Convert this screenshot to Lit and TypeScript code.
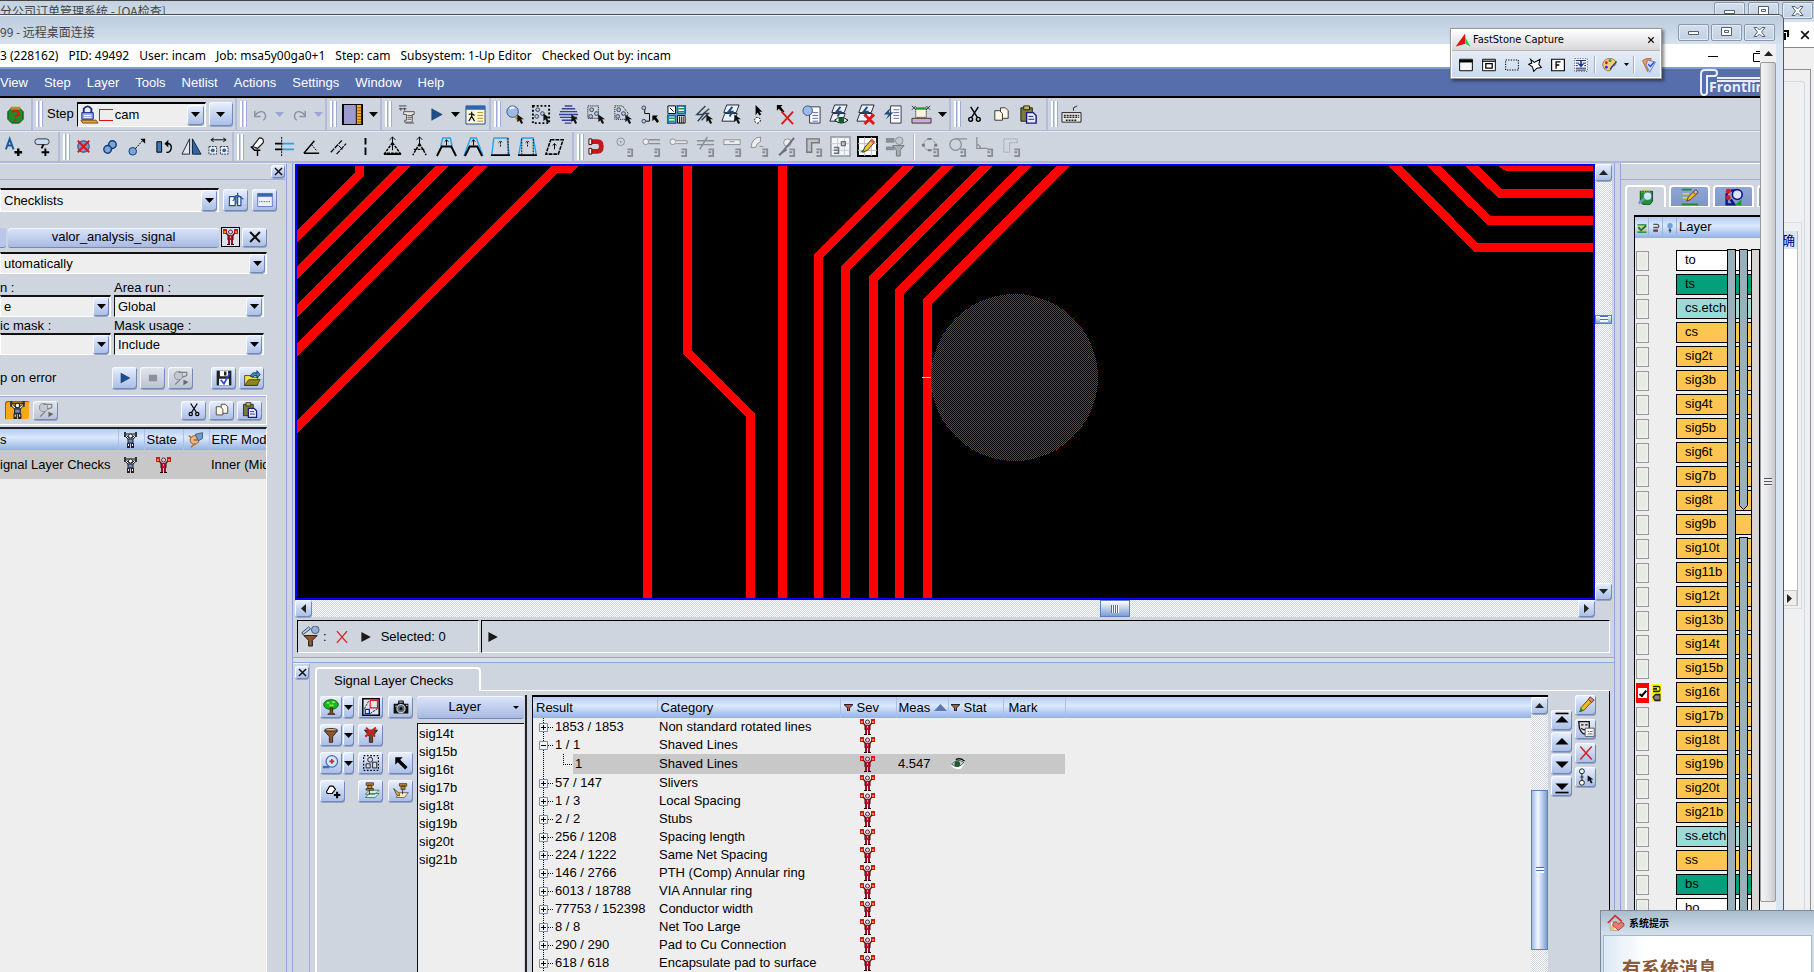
import { LitElement, html, css, svg, nothing } from "lit";
import { customElement } from "lit/decorators.js";
import { classMap } from "lit/directives/class-map.js";

/* ---------- shared icon fragments (22 x 22 grid) ---------- */
const cursor = (x: number, y: number) =>
  svg`<path transform="translate(${x} ${y})" d="M0 0v8l2-2 2 4 2-1-2-4h3z" fill="#111"/>`;
const mag = svg`<path d="M14 14h5v7h-5M14 17h3" fill="none" stroke="#8a8e95" stroke-width="2"/>`;
const pads = svg`<circle cx="7" cy="6" r="2" fill="#a9c4ea" stroke="#445"/><circle cx="12" cy="10" r="2" fill="#a9c4ea" stroke="#445"/><circle cx="6" cy="13" r="2" fill="#a9c4ea" stroke="#445"/>`;
const sheets = svg`<path d="M7 1h13l-3 8H4zM5 10h13l-3 8H2z" fill="#e9f3fb" stroke="#223" stroke-width="1"/><path d="M13 3l-4 5h4l-3 5" fill="none" stroke="#234a78" stroke-width="2"/>`;
const ghost = "#8a8e95";

const ICONS: Record<string, unknown> = {
  bug: svg`<path d="M7 4h8l4 4v8l-4 4H7l-4-4V8z" fill="#1f8a2a" stroke="#0a4010"/><path d="M6 3h10v3H6z" fill="#b0902a"/><path d="M8 9q0-2 3-2t3 3q0 2-3 3v1M11 16v2" fill="none" stroke="#f01010" stroke-width="2"/>`,
  lock: svg`<path d="M6 9V5q4-5 8 0v4" fill="none" stroke="#1a2a7a" stroke-width="2"/><path d="M4 9h12v7H4z" fill="#8fa6dc" stroke="#1a2a7a"/><path d="M6 12h8M6 14h8" stroke="#fff"/><path d="M3 17h16l2 3H5z" fill="#e5a33a" stroke="#7a4a10"/>`,
  undo: svg`<path d="M5 7v6h6M5 12q5-6 10-3q3 5-1 8" fill="none" stroke="#8b93a5" stroke-width="1.500"/>`,
  redo: svg`<path d="M17 7v6h-6M17 12q-5-6-10-3q-3 5 1 8" fill="none" stroke="#8b93a5" stroke-width="1.500"/>`,
  book: svg`<path d="M1 0h20v22H1z" fill="#9d9ad0" stroke="#000" stroke-width="2"/><path d="M15 1h5v20h-5z" fill="#f2b21c"/><path d="M15 1v20" stroke="#000"/><path d="M16 4h4M16 7h4M16 10h4M16 13h4M16 16h4M16 19h4" stroke="#8a5a00"/>`,
  script: svg`<path d="M2 2h8M4 4v3M8 4v3M2 5h8" stroke="#444" fill="none"/><path d="M7 8h11v3h-2v8H8v-2h2V11H7z" fill="#e6e6e0" stroke="#555"/><path d="M11 12h5M11 14h5M11 16h4M9 20h9" stroke="#555"/>`,
  play: svg`<path d="M6 5l11 6-11 6z" fill="#1d4f8c" stroke="#0d2b55" stroke-width=".5"/>`,
  stop: svg`<path d="M6 7h10v8H6z" fill="#8c8f96"/>`,
  tasks: svg`<path d="M1 2h20v19H1z" fill="#fdf8d8" stroke="#1f4a86"/><path d="M1 2h20v4H1z" fill="#2e66b4"/><path d="M13 9h6M13 12h6M13 15h6M13 18h6" stroke="#b09020"/><path d="M7 8v5M4 11l3-1 3 2M7 13l-3 5M7 13l3 5" stroke="#111" fill="none" stroke-width="1.3"/>`,
  zoomsel: svg`<circle cx="9" cy="8" r="6" fill="#9dbbe9" stroke="#3a5288"/><path d="M6 5q2-2 5-1" stroke="#fff" stroke-width="2" fill="none"/><path d="M12 13l4 5" stroke="#c89030" stroke-width="3"/>${cursor(14, 11)}`,
  selrect: svg`<path d="M2 2h17v18H2z" fill="none" stroke="#000" stroke-width="2" stroke-dasharray="2 2"/>${pads}${cursor(13, 10)}`,
  selcircle: svg`<path d="M7 2h8M4 5h14M2 8h18M1 11h20M2 14h18M4 17h14M7 20h7" stroke="#34409a" stroke-width="1.500"/>${cursor(14, 11)}`,
  selbox: svg`<path d="M3 2h11v13H3z" fill="none" stroke="#000" stroke-dasharray="1 1"/>${pads}${cursor(14, 11)}`,
  selpoly: svg`<path d="M3 2h8l6 8-2 6H3z" fill="none" stroke="#000" stroke-dasharray="1 1"/>${pads}${cursor(14, 11)}`,
  selnet: svg`<path d="M6 4v6h5v8H6" fill="none" stroke="#000"/><circle cx="5" cy="4" r="2" fill="#a9c4ea" stroke="#445"/><circle cx="5" cy="18" r="2" fill="#a9c4ea" stroke="#445"/><path d="M14 12h6l-2 2 3 4-2 2-3-4-2 2z" fill="#000"/>`,
  panels: svg`<path d="M2 2h8v8H2z" fill="#fff" stroke="#000"/><path d="M12 2h8v8h-8zM2 12h8v8H2z" fill="#fff" stroke="#0a6fa8" stroke-width="2"/><path d="M12 12h8v8h-8z" fill="#fff" stroke="#000"/><path d="M13 5h6M13 8h6M3 15h6M3 18h6" stroke="#189a38" stroke-width="1.500"/><path d="M14 13v7M16 13v7M18 13v7M4 4l4 4" stroke="#000"/>`,
  bolt: svg`<path d="M13 2L4 11h7L5 18M17 5l-6 5h5l-7 7" fill="none" stroke="#345" stroke-width="1.5"/>${cursor(14, 11)}`,
  boltsheet: svg`${sheets}${cursor(15, 11)}`,
  pick: svg`<path d="M9 1v11l2-3 2 3 2-1-2-3h3z" fill="#000"/><circle cx="11" cy="17" r="3" fill="#fff" stroke="#000" stroke-dasharray="2 1"/>`,
  unpick: svg`<path d="M3 1h6L7 3l4 5-2 1-4-4-2 2z" fill="#000"/><path d="M8 8l12 13M20 8L8 21" stroke="#e01818" stroke-width="2"/>`,
  finddoc: svg`<path d="M9 3h11v17H9z" fill="#fff" stroke="#334"/><path d="M12 9h6M12 12h6M12 15h6M12 18h6" stroke="#5a6ab0"/><circle cx="7" cy="7" r="5" fill="#9dbbe9" stroke="#3a5288"/>`,
  eyesheet: svg`${sheets}<path d="M7 17q6-6 14 0q-7 6-14 0z" fill="#dfe" stroke="#000"/><circle cx="14" cy="17" r="3" fill="#165a28"/>`,
  xsheet: svg`${sheets}<path d="M10 11l10 10M20 11L10 21" stroke="#e01818" stroke-width="3"/>`,
  boltdoc: svg`<path d="M9 2h11v18H9z" fill="#fff" stroke="#334"/><path d="M12 6h6M12 9h6M12 12h6M12 15h6" stroke="#5a6ab0"/><path d="M9 4L2 11h5l-3 5 8-7H7z" fill="#1e4a78"/>`,
  measure: svg`<path d="M5 4h11v10H5z" fill="#fbf3dc" stroke="#000" stroke-dasharray="1 1"/><path d="M5 5h11" stroke="#21a030" stroke-width="2"/><path d="M1 2l4 4M5 2L1 6M16 2l4 4M20 2l-4 4" stroke="#333"/><path d="M1 15h20v5H1z" fill="#c9a9e0" stroke="#432"/>`,
  cut: svg`<path d="M7 3l7 11M15 3L8 14" stroke="#000" stroke-width="1.500"/><circle cx="7" cy="16" r="2" fill="none" stroke="#000" stroke-width="1.500"/><circle cx="15" cy="16" r="2" fill="none" stroke="#000" stroke-width="1.500"/>`,
  copy: svg`<path d="M10 4h5l3 3v8h-8z" fill="#fff8e8" stroke="#333"/><path d="M4 7h5l3 3v7H4z" fill="#fff8e8" stroke="#333"/>`,
  paste: svg`<path d="M3 4h12v14H3z" fill="#777d35" stroke="#222"/><path d="M6 2h6v4H6z" fill="#c9b860" stroke="#222"/><path d="M9 9h7l3 3v8H9z" fill="#e8ecff" stroke="#1a1a7a" stroke-width="1.500"/><path d="M11 13h5M11 16h6" stroke="#1a1a7a"/>`,
  keyboard: svg`<path d="M13 7V4l4-2" stroke="#222" fill="none"/><path d="M1 9h20v10H1z" fill="#e8e8e8" stroke="#222"/><path d="M3 12h16M3 14h16M5 17h12" stroke="#222" stroke-width="1.5" stroke-dasharray="2 1"/>`,

  addtext: svg`<path d="M3 14L7 3l4 11M5 10h5" fill="none" stroke="#1c5a9a" stroke-width="2"/><path d="M16 13v8M12 17h8" stroke="#000" stroke-width="2.500"/>`,
  addpad: svg`<rect x="3" y="3" width="15" height="6" rx="3" fill="#c9dcf6" stroke="#333"/><path d="M14 13v8M10 17h8M12 9l-2 4" stroke="#000" stroke-width="2"/>`,
  del: svg`<circle cx="11" cy="11" r="6" fill="#6f9ad4" stroke="#1c3a6a"/><path d="M5 5l12 12M17 5L5 17" stroke="#d81616" stroke-width="2"/>`,
  merge: svg`<circle cx="13" cy="9" r="4" fill="#7aa5de" stroke="#123a70" stroke-width="1.5"/><circle cx="8" cy="14" r="4" fill="#7aa5de" stroke="#123a70" stroke-width="1.5"/>`,
  stretch: svg`<circle cx="6" cy="16" r="4" fill="#7aa5de" stroke="#123a70"/><path d="M9 13l9-10" stroke="#000" stroke-dasharray="2 1"/><path d="M14 3h5v5z" fill="#000"/>`,
  rotate: svg`<path d="M3 6h5v11H3z" fill="#3f78b8" stroke="#000"/><path d="M12 8q7-1 6 5q-1 5-5 4" fill="none" stroke="#000" stroke-width="1.5"/><path d="M11 8l4-4v8z" fill="#000"/>`,
  mirror: svg`<path d="M9 3v16H1z" fill="#dfe8f5" stroke="#222"/><path d="M12 3v16h9z" fill="#2f68a8" stroke="#123"/>`,
  spread: svg`<path d="M4 4h14M6 2L3 4l3 2M16 2l3 2-3 2" stroke="#000" fill="none"/><path d="M1 11h8v8H1zM13 11h8v8h-8z" fill="#e9f1fc" stroke="#333" stroke-dasharray="2 1"/><circle cx="5" cy="15" r="2" fill="#2b62ae"/><circle cx="17" cy="15" r="2" fill="#2b62ae"/>`,
  marker: svg`<path d="M6 11l7-9q5 0 4 5l-6 6z" fill="#fff" stroke="#222" stroke-width="1.300"/><path d="M4 11l4 4h6M11 15v6" stroke="#000" fill="none" stroke-width="1.5"/>`,
  cross2: svg`<path d="M1 8h8M1 14h8" stroke="#000" stroke-width="2"/><path d="M9 8h12M9 14h12" stroke="#28a4ee" stroke-width="2"/><path d="M8 1v20" stroke="#000" stroke-dasharray="2 1"/>`,
  angle: svg`<path d="M3 18h16M3 18L14 5" fill="none" stroke="#000" stroke-width="1.5"/><path d="M11 9l5 6" stroke="#000" stroke-dasharray="2 1"/>`,
  parallel: svg`<path d="M3 17L15 4M9 19L19 8" stroke="#000" stroke-width="1.3" stroke-dasharray="5 1"/><path d="M11 10l4 4" stroke="#000"/>`,
  vert: svg`<path d="M11 2v7M11 12v8" stroke="#000" stroke-width="2"/>`,
  tri1: svg`<path d="M11 7L3 18h16z" fill="none" stroke="#000" stroke-width="1.5" stroke-dasharray="3 1"/><path d="M2 19h18" stroke="#000" stroke-width="2"/><path d="M11 1v14M8 4l3-3 3 3" stroke="#000" fill="none"/>`,
  tri2: svg`<path d="M11 8L4 20M11 8l7 12M5 14h12" fill="none" stroke="#000" stroke-width="1.5" stroke-dasharray="3 1"/><path d="M11 1v10M8 4l3-3 3 3" stroke="#000" fill="none"/>`,
  trap1: svg`<path d="M5 11l2-9h8l2 9" fill="none" stroke="#28a4ee" stroke-width="1.5"/><path d="M1 21l5-10h10l5 10" fill="none" stroke="#000" stroke-width="2"/><path d="M11 10V4M9 6l2-2 2 2" stroke="#000" fill="none"/>`,
  trap2: svg`<path d="M1 21L8 2h6l7 19" fill="none" stroke="#28a4ee" stroke-width="1.5"/><path d="M2 21L7 11h8l5 10" fill="none" stroke="#000" stroke-width="2"/><path d="M11 10V4M9 6l2-2 2 2" stroke="#000" fill="none"/>`,
  trap3: svg`<path d="M4 2h14l2 17M4 2L2 19" fill="none" stroke="#28a4ee" stroke-width="1.5"/><path d="M1 20h20" stroke="#000" stroke-width="2"/><path d="M11 11V5M9 7l2-2 2 2M19 2v18" stroke="#000" fill="none" stroke-dasharray="2 1"/>`,
  trap4: svg`<path d="M5 2h12l3 17M5 2L2 19" fill="none" stroke="#28a4ee" stroke-width="1.5"/><path d="M1 20h20" stroke="#000" stroke-width="2"/><path d="M11 11V5M9 7l2-2 2 2M5 3v16M17 3v16" stroke="#000" fill="none" stroke-dasharray="2 1"/>`,
  shear: svg`<path d="M7 4h13l-5 15H2z" fill="none" stroke="#000" stroke-width="1.6" stroke-dasharray="4 1"/><path d="M11 14V8M9 10l2-2 2 2" stroke="#000" fill="none"/>`,
  magnet: svg`<path d="M3 6h8q4 0 4 5t-4 5H3" fill="none" stroke="#c4161c" stroke-width="5"/><path d="M2 3h3v6H2zM2 13h3v6H2z" fill="#f3f3f3" stroke="#400"/>`,
  m1: svg`<circle cx="7" cy="6" r="4" fill="none" stroke=${ghost}/><circle cx="7" cy="6" r="1" fill=${ghost}/>${mag}`,
  m2: svg`<circle cx="5" cy="6" r="3" fill="#eee" stroke=${ghost}/><path d="M8 4h12M8 8h12" stroke=${ghost} stroke-width="1.5"/>${mag}`,
  m3: svg`<circle cx="5" cy="6" r="3" fill="#eee" stroke=${ghost}/><path d="M8 5h12v3H8" fill="#e8e8e8" stroke=${ghost}/>${mag}`,
  m4: svg`<path d="M2 5h18M2 9h18M13 1L5 14" stroke=${ghost} stroke-width="1.5"/>${mag}`,
  m5: svg`<rect x="2" y="4" width="17" height="5" fill="#eee" stroke=${ghost}/><path d="M8 6h5" stroke=${ghost}/>${mag}`,
  m6: svg`<path d="M2 12Q3 2 12 1v5Q8 7 7 12z" fill="#eee" stroke=${ghost}/><path d="M11 11h4" stroke=${ghost}/>${mag}`,
  m7: svg`<circle cx="12" cy="7" r="4" fill="#eee" stroke=${ghost}/><path d="M19 2L4 20M3 20l8-6" stroke="#6c7078" stroke-width="2"/>${mag}`,
  m8: svg`<path d="M4 3h13v4H9v10H4z" fill="#c0c4ca" stroke="#777" stroke-width="1.5"/>${mag}`,
  m9: svg`<path d="M1 1h20v20H1z" fill="#f4f6fa" stroke="#8f949c" stroke-width="1.5"/><path d="M1 8h20M1 15h20M8 1v20M15 1v20" stroke="#c4c8d0"/><path d="M4 12h5v6H4M4 15h4M12 6h4v4h-4z" fill="none" stroke="#6c7078" stroke-width="1.5"/>`,
  m10: svg`<path d="M1 1h20v20H1z" fill="#fff" stroke="#000" stroke-width="2"/><path d="M1 8h20M1 15h20M8 1v20M15 1v20" stroke="#bbb"/><path d="M6 17l2-5 7-8 3 3-7 8z" fill="#f1c431" stroke="#333"/><path d="M14 5l2-2 3 3-2 2z" fill="#e25a4a"/><path d="M3 17l4-3 1 3z" fill="#178a2a"/>`,
  m11: svg`<path d="M2 2h9v5H2zM2 11h9v4H2z" fill=${ghost}/><circle cx="16" cy="5" r="4" fill="#c4c8ce" stroke=${ghost}/><path d="M9 10h12l-4 5v6h-4v-6z" fill="#a9adb4" stroke="#777"/>`,
  m12: svg`<circle cx="10" cy="9" r="6" fill="none" stroke=${ghost} stroke-dasharray="2 1"/><path d="M8 2h4v2H8zM8 14h4v2H8zM2 8h3v3H2zM15 8h3v3h-3z" fill="#777"/>${mag}`,
  m13: svg`<circle cx="9" cy="9" r="6" fill="none" stroke=${ghost} stroke-width="1.3"/><path d="M9 3h12" stroke=${ghost} stroke-width="1.3"/>${mag}`,
  m14: svg`<path d="M3 1v12h11M3 9q3 0 4 4" fill="none" stroke=${ghost} stroke-width="1.3"/>${mag}`,
  m15: svg`<path d="M3 3h14v4h-8v10H3z" fill="none" stroke=${ghost} stroke-dasharray="1 1"/>${mag}`,

  edit: svg`<path d="M3 7h7v11H3zM13 7h4v11h-4z" fill="#fff" stroke="#2a4a9a" stroke-width="1.5"/><path d="M11 16V5M13 2v6M8 9l5-4 7 5M7 12l4-4" stroke="#2a5aaa" fill="none" stroke-width="1.5"/>`,
  window: svg`<path d="M2 3h18v16H2z" fill="#eaf1fd" stroke="#5070b8"/><path d="M2 3h18v4H2z" fill="#3b62b4"/><path d="M4 13h14" stroke="#333" stroke-dasharray="1 1"/>`,
  man: svg`<g transform="scale(1.375)"><path d="M0 0h4v5H0zM11 0h4v5h-4z" fill="#d3142a"/><path d="M1 2h2v2H1zM12 2h2v2h-2z" fill="#f28a1c"/><path d="M3 4l3 3M12 4L9 7" stroke="#5a1408" stroke-width="1.400"/><circle cx="7.500" cy="3" r="2" fill="#e8d8e4" stroke="#5a2040"/><path d="M5 6h5v5H5z" fill="#b5122c"/><path d="M7 7h1v2H7z" fill="#ff8a8a"/><path d="M5 6v5M10 6v5" stroke="#3a0a10"/><path d="M5 11h2v4H5zM8 11h2v4H8z" fill="#9c0f28"/><path d="M4 15h3v1H4zM8 15h3v1H8z" fill="#200"/></g>`,
  lift: svg`<g transform="scale(1.375)"><path d="M1 2h13" stroke="#111"/><path d="M1 0h2v5H1zM12 0h2v5h-2z" fill="#2a3446"/><path d="M3 4l3 3M12 4L9 7" stroke="#222" stroke-width="2.400"/><path d="M3 4l3 3M12 4L9 7" stroke="#f4f4f4" stroke-width="1"/><circle cx="7.500" cy="4" r="2" fill="#fff" stroke="#222"/><path d="M5 7h5v4H5z" fill="#7288b8" stroke="#223"/><path d="M4 11h3v5H4zM8 11h3v5H8z" fill="#222"/><path d="M5 12h1v2H5zM9 12h1v2H9z" fill="#eef"/></g>`,
  close: svg`<path d="M5 5l12 12M17 5L5 17" stroke="#111" stroke-width="2.500"/>`,
  whistle: svg`<circle cx="8" cy="8" r="5" fill="#c6cad0" stroke="#7e828a"/><path d="M8 4h10v4l-5 2M10 13l-6 6" fill="none" stroke="#7e828a" stroke-width="1.5"/><path d="M14 13l6 3-6 4z" fill="#666"/>`,
  whistlec: svg`<circle cx="9" cy="11" r="6" fill="#f1b57a" stroke="#6a3c10"/><path d="M10 3l10-2v8l-6 3z" fill="#6e9ed0" stroke="#345"/><path d="M1 5l4 3M10 16l-6 5" stroke="#b07020" stroke-width="2"/><path d="M8 11h5" stroke="#222"/>`,
  save: svg`<path d="M2 2h18v18H2z" fill="#222"/><path d="M6 2h10v7H6zM5 12h12v8H5z" fill="#fff"/><path d="M11 3h3v5h-3z" fill="#222"/><path d="M7 13l4 5 7-13" fill="none" stroke="#2b46d8" stroke-width="2"/>`,
  open: svg`<path d="M2 8h7l2 2h7v10H2z" fill="#f4e13c" stroke="#333"/><path d="M2 20l5-7h14l-4 7z" fill="#8c8420" stroke="#333"/><path d="M9 9q2-6 8-4V2l4 5-4 4V8q-4-1-5 2z" fill="#2f93c8" stroke="#124"/>`,
  funnelsel: svg`<path d="M2 7l7-6 2 2-8 6z" fill="#b5d2f2" stroke="#345"/><circle cx="16" cy="4" r="4" fill="#8fb0dd" stroke="#556"/><path d="M4 10h14l-5 5v6H9v-6z" fill="#8a5630" stroke="#2c180a"/>`,
  redx: svg`<path d="M4 3l14 16M18 3L4 19" stroke="#d82020" stroke-width="1.800"/>`,
  tri: svg`<path d="M6 4l13 7-13 7z" fill="#1a1a1a"/>`,
  tree: svg`<ellipse cx="11" cy="8" rx="9" ry="6" fill="#18b818" stroke="#0a4a0a"/><path d="M6 6h3M12 5h4M9 9h5" stroke="#7af05a" stroke-width="2"/><path d="M10 12h3v6l3 2H7l3-2z" fill="#8a4a1a" stroke="#3a1a00"/>`,
  shapes: svg`<path d="M1 1h20v20H1z" fill="#dde4f4" stroke="#000" stroke-width="1.800"/><path d="M10 3h9v9h-9z" fill="#e4e6f4" stroke="#e01818" stroke-width="1.500"/><path d="M4 14h5v5H4z" fill="#dfe4ff" stroke="#1818e0" stroke-width="1.500"/><path d="M3 13l5-9M10 19l9-6" stroke="#000" stroke-dasharray="3 1"/>`,
  camera: svg`<path d="M2 7h5l1-4h6l1 4h5v12H2z" fill="#111"/><circle cx="11" cy="13" r="5" fill="#556f86" stroke="#fff"/><circle cx="11" cy="13" r="2" fill="#111"/><path d="M9 5h4M4 10h2M17 9h2" stroke="#fff"/>`,
  funnel: svg`<ellipse cx="11" cy="5" rx="8" ry="2" fill="#d8b890" stroke="#2c180a"/><path d="M3 6l6 7v7h4v-7l6-7z" fill="#8a5630" stroke="#2c180a"/>`,
  funnelx: svg`<path d="M3 5h16l-6 8v7H9v-7z" fill="#6a4630" stroke="#2c180a"/><path d="M5 2l11 11M17 2L4 13" stroke="#e01818" stroke-width="2.500"/>`,
  zoom: svg`<circle cx="12" cy="9" r="7" fill="#d5e6fb" stroke="#4a6ab0" stroke-width="1.5"/><path d="M12 6v6M9 9h6" stroke="#e01818" stroke-width="2"/><path d="M1 16h8" stroke="#4a6ab0" stroke-width="3"/>`,
  multisel: svg`<path d="M2 2h18v18H2z" fill="none" stroke="#000" stroke-dasharray="2 2" stroke-width="1.5"/><circle cx="10" cy="7" r="3" fill="#dde" stroke="#000"/><path d="M5 12h5v5H5zM13 10h5v7h-5z" fill="#dde" stroke="#000"/>`,
  arrow: svg`<path d="M4 4h9l-3 3 9 9-3 3-9-9-3 3z" fill="#000"/>`,
  polyadd: svg`<path d="M3 12l4-7h4l3 4-4 5H4z" fill="#fff" stroke="#000" stroke-width="1.4"/><path d="M16 12v8M12 16h8" stroke="#000" stroke-width="2.500"/>`,
  pinlayers: svg`<path d="M4 19h12l5-5H9zM4 15h12l5-5H9z" fill="#d9efe0" stroke="#375"/><path d="M5 1h9v3H5zM7 4h5v4H7zM5 8h9v2H5z" fill="#b98a3a" stroke="#432"/><path d="M9 10v5" stroke="#222"/>`,
  pinpen: svg`<path d="M5 19h10l5-6H9z" fill="#fbe8c4" stroke="#654"/><path d="M9 2h9v3H9zM11 5h5v4h-5z" fill="#b98a3a" stroke="#432"/><path d="M13 9v6" stroke="#222"/><path d="M2 8l7 6v3l-3-1z" fill="#f1c431" stroke="#432"/>`,
  pencil: svg`<path d="M4 19l1-5 10-11 4 3-10 11z" fill="#f1b81c" stroke="#5a3a00"/><path d="M14 4l2-3 5 4-3 3z" fill="#e08a80" stroke="#5a1a10"/><path d="M2 20l3-5 3 3z" fill="#178a2a"/>`,
  mask: svg`<path d="M2 2h13v8q-3 7-6 7t-6-7z" fill="#dfe0e4" stroke="#111" stroke-width="1.6"/><path d="M5 6h3M10 6h3M5 10q4 4 7 0" stroke="#111" stroke-width="1.5" fill="none"/><path d="M10 10h11v10H10z" fill="#fff" stroke="#445"/><path d="M13 14h2M16 14h3M13 17h6" stroke="#445"/>`,
  chain: svg`<circle cx="6" cy="4" r="3" fill="#dfe" stroke="#000"/><circle cx="6" cy="18" r="3" fill="#ffd" stroke="#000"/><path d="M6 7v8M4 11h4" stroke="#000"/>${cursor(13, 9)}`,
  top: svg`<path d="M3 3h16" stroke="#000" stroke-width="2"/><path d="M11 6l8 8H3z" fill="#000"/>`,
  up: svg`<path d="M11 6l8 8H3z" fill="#000"/>`,
  down: svg`<path d="M11 16l8-8H3z" fill="#000"/>`,
  bottom: svg`<path d="M3 19h16" stroke="#000" stroke-width="2"/><path d="M11 16l8-8H3z" fill="#000"/>`,
  eye: svg`<path d="M1 11q4-8 19-7v4q-2 11-10 10Q3 17 1 11z" fill="#fff"/><path d="M2 11q8-9 17-2q-8 10-17 2z" fill="#c6dcc8" stroke="#222"/><circle cx="10" cy="11" r="4" fill="#1e5e2e"/><path d="M8 5q6-3 12 2" fill="none" stroke="#111" stroke-width="2"/>`,
  tab1: svg`<path d="M4 4h15v12l-3 4H7l-3-3z" fill="#169a2e" stroke="#053a10"/><path d="M6 2v4M9 2v4M12 2v4M15 2v4" stroke="#d8c020"/><circle cx="13" cy="10" r="5" fill="#cfe6fb" stroke="#567"/><path d="M9 13l-7 6" stroke="#7a95b8" stroke-width="3"/>`,
  tab2: svg`<path d="M1 2h12M1 20h20" stroke="#1b8a30" stroke-width="2"/><path d="M2 7h8M2 12h6" stroke="#f0d020" stroke-width="2"/><path d="M7 16l2-5 8-8 3 3-8 8z" fill="#f1b81c" stroke="#432"/><path d="M15 5l3-3 3 3-3 3z" fill="#f0a8a0" stroke="#432"/>`,
  tab3: svg`<path d="M2 6v14h9l-4-6M7 3h6v4" fill="none" stroke="#101880" stroke-width="3"/><circle cx="4" cy="4" r="3" fill="#e01818"/><circle cx="4" cy="12" r="3" fill="#e01818"/><circle cx="15" cy="8" r="6" fill="#d9e6fb" stroke="#101880" stroke-width="2"/><path d="M20 14v7h-8z" fill="#169a2e"/>`,
  h1: svg`<path d="M1 4h20M1 20h20" stroke="#0f7a28" stroke-width="3"/><path d="M1 9h20M1 15h20" stroke="#e0c820" stroke-width="3"/><path d="M3 9l6 7L20 6" fill="none" stroke="#0f7a28" stroke-width="4"/>`,
  h2: svg`<path d="M5 3h8q4 0 4 4t-4 3H5" fill="none" stroke="#555" stroke-width="3"/><path d="M5 17h10" stroke="#444" stroke-width="5"/><path d="M11 15h3v4h-3z" fill="#c22"/>`,
  h3: svg`<circle cx="11" cy="6" r="6" fill="#6aa2da"/><path d="M11 12v9M8 15l6 2" stroke="#345" stroke-width="3"/>`,
  snap: svg`<path d="M1 0h20v22H1z" fill="#ff0"/><path d="M4 3h11q3 0 3 3t-3 3H4M12 6H4" fill="none" stroke="#222" stroke-width="2"/><path d="M4 16l5-3h9v7H8z" fill="#888" stroke="#222" stroke-width="2"/>`,
  fsLogo: svg`<path d="M1 20L14 2v14z" fill="#e01010"/><path d="M14 7l7 13-7-4z" fill="#20d040"/>`,
  fs1: svg`<path d="M1 2h20v18H1z" fill="#f6f8fb" stroke="#000" stroke-width="1.5"/><path d="M1 3h20v4H1z" fill="#000"/>`,
  fs2: svg`<path d="M1 2h20v18H1z" fill="#fff" stroke="#000" stroke-width="1.5"/><path d="M1 5h20" stroke="#000" stroke-width="2"/><path d="M6 9h10v7H6z" fill="none" stroke="#000" stroke-width="2"/>`,
  fs3: svg`<path d="M1 3h20v16H1z" fill="none" stroke="#000" stroke-width="1.6" stroke-dasharray="2 2"/>`,
  fs4: svg`<path d="M4 2l6 5 9-5-2 8 4 5-7 1-5 5-2-7-6-4 5-2z" fill="#fff" stroke="#000" stroke-width="1.6"/>`,
  fs5: svg`<path d="M1 2h20v18H1z" fill="#fff" stroke="#000" stroke-width="1.8"/><path d="M8 17V6h7M8 11h5" fill="none" stroke="#000" stroke-width="2"/>`,
  fs6: svg`<path d="M1 1h20v20H1z" fill="#fff" stroke="#101850" stroke-dasharray="2 2"/><path d="M3 4h16M3 12h3M16 12h3M3 16h16M3 19h16M3 8h5M14 8h5" stroke="#101850" stroke-width="1.500"/><path d="M11 4v6" stroke="#10309a" stroke-width="2.500"/><path d="M6 9l5 6 5-6z" fill="#10309a"/>`,
  palette: svg`<path d="M10 2q10 0 9 8-1 3-4 2-3 0-2 4-1 4-5 3-7-2-7-9 1-7 9-8z" fill="#f3c98a" stroke="#8a5a20"/><circle cx="6" cy="8" r="2" fill="#e02020"/><circle cx="11" cy="5" r="2" fill="#20a030"/><circle cx="15" cy="8" r="2" fill="#f0e020"/><circle cx="6" cy="14" r="2" fill="#2040e0"/><path d="M20 6l-9 11" stroke="#223a90" stroke-width="2"/>`,
  fs8: svg`<path d="M2 5q4-4 12-3l-5 18z" fill="#f39a50" stroke="#a85a20"/><path d="M9 4l11 3-8 14-5-10z" fill="#cfd9f8" stroke="#5068c0"/><path d="M10 10l3 3 5-6" fill="none" stroke="#2050d0" stroke-width="2"/>`,
  home: svg`<path d="M4 10v10h10V9z" fill="#fff" stroke="#999"/><path d="M1 11l9-9 8 7" fill="none" stroke="#d82828" stroke-width="2"/><path d="M5 14h4v6H5z" fill="#f0c060"/><path d="M14 20l-7-6q0-5 4-4l3 2 3-2q4 0 4 4z" fill="#ee7a72" stroke="#93352f"/>`,
};

const icon = (name: string, cls = "i20") =>
  html`<svg class=${cls} viewBox="0 0 22 22" aria-hidden="true">${ICONS[name]}</svg>`;
const caret = (cls = "") =>
  html`<svg class="caret ${cls}" viewBox="0 0 9 5" aria-hidden="true"><path d="M0 0h9L4.5 5z" /></svg>`;
const tool = (name: string, cls = "") =>
  html`<button class="slot ${cls}" aria-label=${name}>${icon(name, "i22")}</button>`;
const toolCaret = (cls = "") =>
  html`<button class="slot drop" aria-label="more">${caret(cls)}</button>`;
const push = (name: string, cls = "") =>
  html`<button class="push ${cls}" aria-label=${name}>${icon(name)}</button>`;
const pushCaret = () =>
  html`<button class="push w11" aria-label="options">${caret()}</button>`;
const combo = (label: string, value: string, cls = "") => html`
  <span class="combo ${cls}">
    <select aria-label=${label}><option>${value}</option></select>
    <span class="knob">${caret()}</span>
  </span>`;
const scrollBtn = (dir: string) => html`
  <button class="sb" aria-label="scroll ${dir}">
    <svg class="sarrow to-${dir}" viewBox="0 0 9 5" aria-hidden="true"><path d="M0 5h9L4.500 0z" /></svg>
  </button>`;

const TITLE = ["3 (228162)", "PID: 49492", "User: incam", "Job: msa5y00ga0+1", "Step: cam", "Subsystem: 1-Up Editor", "Checked Out by: incam"];
const MENU = ["View", "Step", "Layer", "Tools", "Netlist", "Actions", "Settings", "Window", "Help"];
const SELECT_TOOLS = ["zoomsel", "selrect", "selcircle", "selbox", "selpoly", "selnet", "panels", "bolt", "boltsheet", "pick", "unpick", "finddoc", "eyesheet", "xsheet", "boltdoc"];
const LINE_TOOLS = ["marker", "cross2", "angle", "parallel", "vert", "tri1", "tri2", "trap1", "trap2", "trap3", "trap4", "shear"];
const SNAP_TOOLS = ["magnet", "m1", "m2", "m3", "m4", "m5", "m6", "m7", "m8", "m9", "m10", "m11"];
const SNAP_MORE = ["m12", "m13", "m14", "m15"];

const LAYERS: [string, string][] = [
  ["to", "white"], ["ts", "green"], ["cs.etch", "aqua"], ["cs", ""],
  ["sig2t", ""], ["sig3b", ""], ["sig4t", ""], ["sig5b", ""], ["sig6t", ""], ["sig7b", ""],
  ["sig8t", ""], ["sig9b", ""], ["sig10t", ""], ["sig11b", ""], ["sig12t", ""], ["sig13b", ""],
  ["sig14t", ""], ["sig15b", ""], ["sig16t", ""], ["sig17b", ""], ["sig18t", ""], ["sig19b", ""],
  ["sig20t", ""], ["sig21b", ""], ["ss.etch", "aqua"], ["ss", ""], ["bs", "green"], ["bo", "white"],
];
const SIGNALS = ["sig14t", "sig15b", "sig16t", "sig17b", "sig18t", "sig19b", "sig20t", "sig21b"];

type Result = { count: string; name: string; open?: boolean; child?: boolean; meas?: string };
const RESULTS: Result[] = [
  { count: "1853 / 1853", name: "Non standard rotated lines" },
  { count: "1 / 1", name: "Shaved Lines", open: true },
  { count: "1", name: "Shaved Lines", child: true, meas: "4.547" },
  { count: "57 / 147", name: "Slivers" },
  { count: "1 / 3", name: "Local Spacing" },
  { count: "2 / 2", name: "Stubs" },
  { count: "256 / 1208", name: "Spacing length" },
  { count: "224 / 1222", name: "Same Net Spacing" },
  { count: "146 / 2766", name: "PTH (Comp) Annular ring" },
  { count: "6013 / 18788", name: "VIA Annular ring" },
  { count: "77753 / 152398", name: "Conductor width" },
  { count: "8 / 8", name: "Net Too Large" },
  { count: "290 / 290", name: "Pad to Cu Connection" },
  { count: "618 / 618", name: "Encapsulate pad to surface" },
];

const TRACES = [
  "M62.500-10V8L-10 80.500", "M113-6L-10 117", "M151-6L-10 155", "M190-6L-10 194",
  "M-10 271L258.500 2.500H273l9-9", "M350.500-5V640", "M390.500-5V186l63 63V640", "M485.500-5V640",
  "M617.500-6L521.500 90V640", "M656.500-6L548.500 102V640", "M695-6L576 113V640",
  "M734-6L602.500 125.500V640", "M772-6L630.500 135.500V640",
  "M1092-6L1179 81.500H2310", "M1131-6L1192 54.500H2310", "M1169-6L1203 27.500H2310", "M1200-6L1210 .5H2310",
];

@customElement("app-root")
export class AppRoot extends LitElement {
  static styles = css`
    :host { display: block; position: relative; height: 100vh; overflow: hidden; background: #f0f0f0;
      font: 13px/16px "Liberation Sans", Arial, sans-serif; color: #000; }
    *, *::before, *::after { box-sizing: border-box; }
    button, select, input { font: inherit; color: inherit; margin: 0; padding: 0; border: 0; background: none; border-radius: 0; }
    select { appearance: none; }
    svg { display: block; flex: none; }
    .i22 { width: 21px; height: 21px; }
    .i20 { width: 18px; height: 18px; }
    .i16 { width: 16px; height: 16px; }
    .i14 { width: 14px; height: 14px; }
    .i10 { width: 10px; height: 16px; }
    .caret { width: 9px; height: 5px; fill: #000; }
    .caret.dim { fill: #9aa6d8; }
    .grow { flex: 1; }

    /* order system window at the back */
    .back { position: absolute; inset: 0; display: flex; flex-direction: column; font-family: "Noto Sans CJK SC", sans-serif; }
    .back-title { height: 22px; display: flex; align-items: flex-start; padding: 1px 1px 0 0; gap: 3px; border-top: 1px solid #444;
      background: linear-gradient(#c3d1e0, #d6e2ef); color: #444; }
    .back-title span { font-size: 12px; line-height: 18px; flex: 1; }
    .back-tools { height: 26px; background: #fff; border-bottom: 1px solid #888; display: flex; justify-content: flex-end; align-items: center; gap: 9px; padding-right: 2px; }
    .back-body { flex: 1; padding: 21px 3px 0 0; display: flex; background: #f0f0f0; }
    .back-frame { flex: 1; border: 1px solid #8b8f98; border-left: 0; border-bottom: 0; padding: 11px 5px 0 0; display: flex; }
    .back-page { flex: 1; border: 1px solid #d0dbe4; border-left: 0; border-radius: 0 3px 0 0; padding-top: 140px; }
    .back-group { height: 387px; border: 1px solid #d5dfe5; border-left: 0; margin-right: 2px; padding: 8px 3px 1px 0; }
    .back-list { height: 375px; display: flex; flex-direction: column; align-items: flex-end; background: #fff; color: #000080; border-right: 1px solid #bbb; }
    .back-list b { font-weight: 400; font-size: 13px; line-height: 18px; width: 15px; background: #d7e4f4; }
    .back-list .sbx { margin-top: auto; width: 15px; height: 16px; background: #eee; border: 1px solid #ccc; display: grid; place-items: center; }
    .cap { width: 31px; height: 17px; border: 1px solid #8797ad; border-radius: 2px; display: grid; place-items: center;
      background: linear-gradient(#d4dfec, #c2d0e2); box-shadow: inset 0 0 0 1px #e4ecf5; }
    .cap svg { width: 13px; height: 10px; fill: #fff; stroke: #555f72; }

    /* remote desktop window */
    .remote { position: absolute; top: 14px; left: 0; right: 30px; bottom: 0; display: flex; flex-direction: column;
      border-top: 1px solid #4a4a4a; border-right: 1px solid #555; border-radius: 0 6px 0 0; overflow: hidden; background: #d9e5f2; }
    .remote-title { height: 29px; display: flex; align-items: center; gap: 2px; padding: 4px 8px 0 0; border-top: 1px solid #eef4fa;
      background: linear-gradient(#bccbdb, #d5e1ee); color: #444; font-family: "Noto Sans CJK SC", sans-serif; font-size: 12px; }
    .remote-body { flex: 1; display: flex; min-height: 0; padding-right: 7px; }
    .session { flex: 1; min-width: 0; display: flex; flex-direction: column; background: #ced5df; overflow: hidden; }
    .rscroll { width: 16px; display: flex; flex-direction: column; background: #f1f1f1; }
    .rscroll button { height: 18px; display: grid; place-items: center; }
    .rscroll .thumb { flex: 840; border: 1px solid #999; border-radius: 2px; background: linear-gradient(90deg, #f4f4f4, #e6e6e6 45%, #c9cacd); display: grid; place-items: center; }
    .rscroll .rest { flex: 70; }
    .grip { width: 8px; height: 8px; background: repeating-linear-gradient(#555 0 1px, #eee 1px 3px); }

    .apptitle { height: 23px; background: #fff; display: flex; align-items: center; gap: 10px;
      font-family: "Noto Sans", sans-serif; font-size: 12px; white-space: nowrap; }
    .apptitle svg { width: 54px; height: 14px; fill: none; stroke: #000; margin-left: auto; }
    .menubar { height: 31px; border-top: 2px solid #7f9ad8; border-bottom: 2px solid #000; background: #566eab; color: #fff;
      display: flex; align-items: center; justify-content: space-between; overflow: hidden; }
    .menus { display: flex; gap: 16px; }
    .menus button { color: #fff; }
    .brand { width: 60px; height: 27px; position: relative; overflow: hidden; color: #e8edf8; font: bold 14px/20px "Open Sans", sans-serif; }
    .brand svg { width: 60px; height: 27px; fill: none; stroke: #e8edf8; stroke-width: 2; }
    .brand span { position: absolute; left: 9px; top: 8px; }

    .bar { display: flex; height: 33px; border-bottom: 1px solid #aeb7d6; background: #ced5df; }
    .bar + .bar { height: 32px; border-bottom-width: 2px; border-top: 1px solid #e8ebf3; }
    .group { display: flex; align-items: center; }
    .group + .group { border-left: 2px solid #b4bcda; }
    .group.padded { padding-right: 4px; }
    .handle { width: 6px; height: 26px; margin: 0 1px 0 3px; border: solid #fff; border-width: 0 2px; box-shadow: 1px 0 #9fadd4, inset 1px 0 #9fadd4; background: #ced5df; }
    .slot { width: 27px; height: 28px; display: grid; place-items: center; }
    .slot.wide { width: 31px; }
    .slot.drop { width: 12px; }
    .divider { width: 2px; height: 26px; margin: 0 2px 0 5px; background: #aeb7d0; border-right: 1px solid #fff; }
    .steplabel { padding: 0 3px 0 4px; }
    .steppick { width: 129px; height: 25px; border: 1px solid #fff; border-top: 2px solid #000; border-left: 1px solid #000; background: #eee; display: flex; align-items: center; padding-right: 1px; }
    .steppick .sb { height: 20px; }
    .steppick select { width: 73px; padding-left: 2px; }
    .swatch { width: 14px; height: 12px; border: 1px solid #e01010; border-right: 0; border-width: 1px 0 1px 1px; }

    .push, .knob, .sb { background: linear-gradient(#eaf1fe, #c3d2f0 55%, #a9bde4); border-radius: 3px; box-shadow: inset 1px 1px #f6f9ff, inset -1px -1px #7488b8, 0 1px #97a5c4; }
    .push { width: 25px; height: 22px; display: grid; place-items: center; flex: none; }
    .push.w22 { width: 22px; }
    .push.w11 { width: 11px; }
    .push.w21 { width: 21px; height: 20px; }
    .push.low { height: 19px; }
    .push.off { background: linear-gradient(#e2e6ee, #b9c2d2); }
    .push.on { background: #f6a71a; box-shadow: inset 1px 1px #9a5c00, inset -1px -1px #ffd36a; }
    .push.tiny { width: 14px; height: 13px; }
    .push.tiny svg { width: 13px; height: 13px; }
    .push.big { width: 24px; height: 24px; margin: 0 2px 0 3px; }
    .combo { display: flex; height: 22px; background: #eee; border: 1px solid #fff; border-top: 2px solid #111; min-width: 0; padding-right: 1px; }
    .combo.edge { border-left: 1px solid #111; }
    .combo select { flex: 1; min-width: 0; padding-left: 3px; }
    .knob { width: 16px; display: grid; place-items: center; flex: none; }

    .work { flex: 1; display: flex; min-height: 0; }
    .left { width: 287px; border-right: 1px solid #8fa5dc; display: flex; flex-direction: column; border-top: 1px solid #e8ebf3; }
    .left-head { height: 16px; display: flex; justify-content: flex-end; padding: 1px; border-bottom: 1px solid #a4b1d3; }
    .lrow { display: flex; align-items: center; }
    .r1 { margin: 8px 9px 0 0; gap: 4px; }
    .r1 .combo { height: 24px; }
    .inner { margin-right: 19px; display: flex; flex-direction: column; flex: 1; }
    .r2 { margin-top: 15px; gap: 2px; height: 20px; }
    .r2 .name { flex: 1; height: 19px; background: linear-gradient(#dbe5fa, #a9b9e2); border-radius: 3px; box-shadow: inset 0 1px #f4f7ff, 0 1px #7488b8; }
    .r2 .sliver { width: 6px; height: 19px; background: #b9c8ea; box-shadow: 0 1px #7488b8; border-radius: 0 3px 3px 0; }
    .manbox { width: 19px; height: 20px; border: 1px solid #000; display: grid; place-items: center; background: #dde3ee; }
    .r3 { margin-top: 5px; }
    .pairs { display: grid; grid-template-columns: 111px 1fr; gap: 0 3px; padding-right: 3px; margin-top: 5px; }
    .pairs label { line-height: 15px; padding-top: 1px; }
    .r6 { margin-top: 12px; gap: 3px; padding-right: 3px; }
    .r6 .gap { width: 12px; }
    .tray { margin-top: 6px; height: 30px; border: 1px solid #fff; border-left: 0; box-shadow: inset 0 1px #9fadd4; display: flex; align-items: center; gap: 3px; padding: 0 4px 0 2px; }
    .checks { border-collapse: collapse; table-layout: fixed; width: 266px; }
    .checkpane { margin-top: 2px; flex: 1; background: #eee; border-top: 2px solid #222; border-right: 1px solid #fff; overflow: hidden; }
    th { font-weight: 400; text-align: left; padding: 0; background: linear-gradient(#b4caf0, #dce9fd 40%, #93b2e2); height: 21px; white-space: nowrap; overflow: hidden; }
    th + th { border-left: 1px solid #aebfe4; }
    td { padding: 0; white-space: nowrap; overflow: hidden; }
    .checks td { height: 29px; background: #c8c8c8; }
    .checks td:nth-child(n + 2) > svg, .checks th > svg { margin: 0 auto; }
    .checks td:last-child, .checks th:last-child, .checks th:nth-child(3) { padding-left: 2px; }

    .center { flex: 1; min-width: 0; margin: 0 5px; border: solid #8fa5dc; border-width: 0 1px; display: flex; flex-direction: column; }
    .view { flex: 1; min-height: 0; display: grid; grid-template: minmax(0, 1fr) 17px / minmax(0, 1fr) 17px; padding: 1px 2px 0; }
    .canvas { border: 2px solid #00f; background: #000; overflow: hidden; }
    .canvas svg { width: 100%; height: 100%; }
    .traces { fill: none; stroke: #f00; stroke-width: 9px; }
    .track { display: flex; background: conic-gradient(#fff 25%, #ced5df 0 50%, #fff 0 75%, #ced5df 0) 0 0 / 2px 2px; }
    .track.v { flex-direction: column; }
    .sb { width: 17px; height: 17px; display: grid; place-items: center; flex: none; }
    .sarrow { width: 9px; height: 5px; fill: #222; }
    .sarrow.to-down { transform: rotate(180deg); }
    .sarrow.to-left { transform: rotate(-90deg); }
    .sarrow.to-right { transform: rotate(90deg); }
    .knurl { background: linear-gradient(#fff, #7d9cd2); border: 1px solid #5b7fc0; display: grid; place-items: center; }
    .knurl i { background: repeating-linear-gradient(#4a6fb4 0 1px, #f4f8ff 1px 3px); width: 8px; height: 6px; }
    .knurl.h { width: 30px; }
    .knurl.h i { background: repeating-linear-gradient(90deg, #4a6fb4 0 1px, #f4f8ff 1px 2px); width: 8px; height: 8px; }
    .knurl.v { height: 9px; }
    .knurl.tall { background: linear-gradient(90deg, #9fbce8, #f4f8ff 40%, #7d9cd2); }
    .s134 { flex: 134; } .s260 { flex: 260; } .s788 { flex: 788; } .s448 { flex: 448; }
    .s77 { flex: 77; } .s161 { flex: 161; } .s22 { flex: 22; }
    .status { display: flex; gap: 2px; height: 33px; margin: 3px 4px 4px; }
    .cell { border: 1px solid #fff; border-top-color: #000; border-left-color: #000; display: flex; align-items: center; padding-left: 2px; }
    .cell.first { width: 182px; gap: 2px; }
    .cell.first .i16 { margin-left: 5px; }
    .cell .txt { padding-left: 6px; }
    .cell.second { flex: 1; }
    .split { height: 6px; border: solid #8fa5dc; border-width: 1px 0; background: #d8dfe9; }

    .dock { display: flex; padding-right: 4px; }
    .strip { width: 17px; padding: 2px; border-right: 1px solid #a4b1d3; border-top: 1px solid #eef; margin-right: 5px; }
    .pane { flex: 1; min-width: 0; display: flex; flex-direction: column; padding-top: 4px; }
    .tabs { display: flex; }
    .tab { width: 166px; height: 24px; padding: 2px 0 0 17px; text-align: left; border: solid #fff; border-width: 2px 2px 0 2px; border-radius: 4px 4px 0 0; }
    .tabline { flex: 1; border-bottom: 1px solid #fff; }
    .panebody { flex: 1; display: flex; border-left: 2px solid #fff; border-right: 1px solid #000; padding: 4px 13px 0 3px; }
    .tools { width: 96px; display: grid; grid-template-columns: 23px 15px 30px 25px; grid-auto-rows: 22px; row-gap: 6px; align-content: start; padding-top: 1px; }
    .layers { width: 111px; padding: 1px 1px 0; border-right: 2px solid #222; display: flex; flex-direction: column; }
    .layers .head { height: 22px; display: flex; align-items: center; justify-content: flex-end; gap: 30px; padding-right: 4px; background: linear-gradient(#dbe5fa, #a9b9e2); border-radius: 3px; box-shadow: inset 0 1px #f4f7ff, 0 1px #7488b8; }
    .layers ul { margin: 5px 0 0; padding: 1px; list-style: none; flex: 1; background: #eee; border: solid #111; border-width: 1px 0 0 1px; line-height: 18px; }
    .results { flex: 1; margin-left: 5px; border: solid #000; border-width: 2px 0 0 1px; display: flex; background: #eee; }
    .rtable { border-collapse: collapse; table-layout: fixed; width: 100%; }
    .rwrap { flex: 1; }
    .rtable th:first-child { padding-left: 3px; }
    .rtable th:nth-child(2) { padding-left: 3px; }
    .rtable th:nth-child(n + 4) { padding-left: 2px; }
    .rtable th .h { display: flex; align-items: center; gap: 4px; }
    .rtable th:nth-child(3) .h { padding-left: 3px; }
    .rtable th:nth-child(6) { padding-left: 5px; }
    .rtable td { height: 18px; line-height: 18px; }
    .rtable .sel td { height: 20px; }
    .rtable .sel td:not(:last-child):not(:first-child) { background: #c8c8c8; }
    .rtable td:nth-child(2) { padding-left: 2px; }
    .rtable td:nth-child(3) > svg { margin: 0 auto; }
    .rtable td:nth-child(4) { padding-left: 2px; }
    .rtable td:nth-child(5) { padding-left: 2px; }
    .node { display: flex; align-items: stretch; }
    .node svg { width: 22px; height: 18px; fill: none; stroke: #000; }
    .node.child svg { width: 40px; height: 20px; }
    .node.child span { flex: 1; background: #c8c8c8; line-height: 20px; padding-left: 2px; }
    .filter { width: 9px; height: 7px; fill: #c0504a; stroke: #222; }
    .sort { width: 13px; height: 7px; fill: #5d78ad; }
    .vtrack { width: 17px; }
    .nav { display: flex; flex-direction: column; gap: 2px; padding: 15px 0 0 3px; }
    .acts { display: flex; flex-direction: column; gap: 4px; padding: 0 0 0 3px; }

    .right { width: 140px; border-left: 1px solid #8fa5dc; display: flex; flex-direction: column; }
    .right-head { height: 17px; border: solid #a4b1d3; border-width: 0 0 1px; border-top: 1px solid #fff; }
    .rtabs { display: flex; gap: 3px; padding: 5px 0 0 4px; overflow: hidden; }
    .rtabs button { width: 41px; height: 22px; flex: none; display: grid; place-items: center; background: linear-gradient(#8da6d6, #7f96c4); border: 2px solid #fff; border-bottom-width: 1px; border-radius: 4px 4px 0 0; }
    .rtabs button.on { background: #ced5df; border-bottom: 0; }
    .rbody { flex: 1; min-height: 0; margin-left: 4px; border-left: 2px solid #fff; padding: 8px 0 0 7px; display: flex; }
    .stack { flex: 1; min-width: 0; position: relative; background: #eee; border: solid #000; border-width: 2px 0 0 1px; overflow: hidden; }
    .shead { display: flex; height: 21px; background: linear-gradient(#b4caf0, #dce9fd 40%, #93b2e2); }
    .shead span { width: 14px; border-right: 1px solid #a0b4dc; display: grid; place-items: center; }
    .shead b { font-weight: 400; padding: 2px; }
    .rows { list-style: none; margin: 0; padding: 12px 0 0 1px; display: flex; flex-direction: column; gap: 3px; }
    .rows li { display: flex; height: 21px; align-items: center; }
    .rows label { display: flex; flex: 1; align-items: center; height: 21px; }
    .rows input { appearance: none; width: 13px; height: 20px; border: 1px solid #999; background: #e5eae3; box-shadow: inset 0 0 0 2px #eee; display: grid; place-items: center; }
    .rows input:checked { border: 2px solid #f00; border-width: 5px 2px; background: #fff; box-shadow: none; }
    .rows input:checked::after { content: ""; width: 8px; height: 4px; border: solid #000; border-width: 0 0 2px 2px; transform: rotate(-50deg); }
    .pin { width: 27px; display: flex; padding-left: 2px; }
    .pin svg { width: 11px; height: 18px; }
    .lname { flex: 1; height: 21px; padding: 0 8px; line-height: 17px; border: 1px solid #000; background: #fcc650; }
    .lname.white { background: #fff; }
    .lname.green { background: #04a07c; }
    .lname.aqua { background: #9cdbd5; }
    .drills { position: absolute; top: 32px; bottom: 0; right: 0; width: 33px; display: flex; gap: 3px; }
    .drill { width: 9px; border: 1px solid #000; background: #9ab0ba; }
    .drillcol { width: 9px; display: flex; flex-direction: column; gap: 27px; }
    .drillcol svg { width: 9px; height: 261px; fill: #9ab0ba; stroke: #000; }
    .drillcol .drill { flex: 1; }
    .drill.pale { background: #d8d4d4; }

    /* floating windows */
    .capture { position: absolute; top: 28px; right: 152px; width: 212px; height: 51px; display: flex; flex-direction: column; border: 1px solid #999; outline: 1px solid #fff; outline-offset: -2px;
      background: linear-gradient(#fdfdfe, #c9d9ec); box-shadow: 2px 2px 3px #0007; font: 11px/16px "DejaVu Sans Condensed", "DejaVu Sans", sans-serif; }
    .ctitle { height: 22px; display: flex; align-items: center; padding: 0 5px 0 4px; gap: 2px; border-bottom: 1px solid #b5b5b5; background: linear-gradient(#fff, #d8d8da); }
    .ctitle span { flex: 1; }
    .ctools { flex: 1; display: flex; align-items: center; padding-left: 3px; }
    .ctools button { width: 23px; display: grid; place-items: center; }
    .ctools .line { width: 2px; height: 17px; background: #fff; border-left: 1px solid #aab; margin: 0 2px; }
    .ctools .n { width: 10px; }
    .ctools .n svg { width: 5px; height: 3px; }
    .notice { position: absolute; right: 0; bottom: 0; width: 214px; height: 62px; overflow: hidden; border: 1px solid #7d8896; border-right: 0; border-bottom: 0; background: #cfdce9; font-family: "Noto Sans CJK SC", sans-serif; }
    .notice header { height: 23px; display: flex; align-items: center; gap: 4px; padding-left: 6px; font-weight: 700; font-size: 10px; background: linear-gradient(#a9bdcd, #d3e0eb); }
    .notice div { margin: 1px 2px 0; height: 60px; padding: 18px 0 0 18px; border: 1px solid #aab8c6; background: linear-gradient(90deg, #dce9f6, #fff 20%); color: #8a5a3c; font-weight: 700; font-size: 19px; line-height: 28px; }
  `;

  private row(r: Result) {
    return html`<tr class=${classMap({ sel: !!r.child })}>
      <td>
        <div class=${classMap({ node: true, child: !!r.child })}>
          ${r.child
            ? html`<svg viewBox="0 0 40 20" aria-hidden="true"><path d="M10.500 0v20M30.500 0v10M30 10.500h10" stroke-dasharray="1 1" /></svg>`
            : html`<svg viewBox="0 0 22 18" aria-hidden="true"><path d="M10.500 0v18M15 9.500h5" stroke-dasharray="1 1" /><path d="M6.500 5.500h8v8h-8z" fill="#f4f4f4" stroke="#7c8cb0" /><path d=${r.open ? "M8 9.500h5" : "M8 9.500h5M10.500 7v5"} /></svg>`}
          <span>${r.count}</span>
        </div>
      </td>
      <td>${r.name}</td>
      <td>${icon("man", "i16")}</td>
      <td>${r.meas ?? nothing}</td>
      <td>${r.meas ? icon("eye", "i16") : nothing}</td>
      <td></td>
      <td></td>
    </tr>`;
  }

  private caps() {
    return html`
      <button class="cap" aria-label="Minimize"><svg viewBox="0 0 13 10"><path d="M1.500 4.500h10v3h-10z" /></svg></button>
      <button class="cap" aria-label="Maximize"><svg viewBox="0 0 13 10"><path d="M1.500.5h10v8h-10z" /><path d="M4.500 3.500h4v2h-4z" /></svg></button>
      <button class="cap" aria-label="Close"><svg viewBox="0 0 13 10"><path d="M1 .5h3l2.500 2.500L9 .5h3L8.500 5 12 9.500H9L6.500 7 4 9.500H1L4.500 5z" /></svg></button>`;
  }

  private background() {
    return html`<section class="back">
      <div class="back-title"><span>分公司订单管理系统 - [QA检查]</span>${this.caps()}</div>
      <div class="back-tools">
        <svg class="i10" viewBox="0 0 10 16"><path d="M3 4h6v6M1 7h5v5H1z" fill="none" stroke="#000" stroke-width="2" /></svg>
        ${icon("close", "i14")}
      </div>
      <div class="back-body"><div class="back-frame"><div class="back-page"><div class="back-group">
        <div class="back-list"><b>确</b><button class="sbx" aria-label="scroll list"><svg class="sarrow to-right" viewBox="0 0 9 5"><path d="M0 5h9L4.500 0z" /></svg></button></div>
      </div></div></div></div>
    </section>`;
  }

  private toolbars() {
    return html`
      <div class="bar">
        <div class="group">${tool("bug", "wide")}</div>
        <div class="group">
          <i class="handle"></i><label class="steplabel" for="step">Step</label>
          <span class="steppick">${icon("lock", "i22")}<i class="swatch"></i>
            <select id="step"><option>cam</option></select><span class="grow"></span><span class="knob sb">${caret()}</span></span>
          <button class="push big" aria-label="step list">${caret()}</button>
        </div>
        <div class="group"><i class="handle"></i>${tool("undo")}${toolCaret("dim")}${tool("redo")}${toolCaret("dim")}</div>
        <div class="group"><i class="handle"></i>${tool("book", "wide")}${toolCaret()}</div>
        <div class="group"><i class="handle"></i>${tool("script", "wide")}${tool("play")}${toolCaret()}${tool("tasks")}</div>
        <div class="group"><i class="handle"></i>${SELECT_TOOLS.map((t) => tool(t))}${tool("measure", "wide")}${toolCaret()}</div>
        <div class="group padded"><i class="handle"></i>${["cut", "copy", "paste"].map((t) => tool(t))}</div>
        <div class="group"><i class="handle"></i>${tool("keyboard")}</div>
      </div>
      <div class="bar">
        <div class="group">${tool("addtext")}${tool("addpad", "wide")}</div>
        <div class="group"><i class="handle"></i>${["del", "merge", "stretch", "rotate", "mirror", "spread"].map((t) => tool(t))}</div>
        <div class="group padded"><i class="handle"></i>${LINE_TOOLS.map((t) => tool(t))}</div>
        <div class="group"><i class="handle"></i>${SNAP_TOOLS.map((t) => tool(t))}<i class="divider"></i>${SNAP_MORE.map((t) => tool(t))}</div>
      </div>`;
  }

  private leftPanel() {
    return html`<aside class="left">
      <div class="left-head"><button class="push tiny" aria-label="Close panel">${icon("close")}</button></div>
      <div class="lrow r1">${combo("Category", "Checklists", "grow")}${push("edit")}${push("window")}</div>
      <div class="inner">
        <div class="lrow r2"><button class="sliver" aria-label="previous"></button><button class="name">valor_analysis_signal</button>
          <span class="manbox">${icon("man", "i16")}</span>${push("close", "low")}</div>
        <div class="lrow r3">${combo("Run mode", "utomatically", "grow")}</div>
        <div class="pairs">
          <label for="a">n :</label><label for="b">Area run :</label>
          <span class="combo"><select id="a"><option>e</option></select><span class="knob">${caret()}</span></span>
          <span class="combo edge"><select id="b"><option>Global</option></select><span class="knob">${caret()}</span></span>
          <label for="c">ic mask :</label><label for="d">Mask usage :</label>
          <span class="combo"><select id="c"><option></option></select><span class="knob">${caret()}</span></span>
          <span class="combo edge"><select id="d"><option>Include</option></select><span class="knob">${caret()}</span></span>
        </div>
        <div class="lrow r6"><span class="grow">p on error</span>${push("play")}${push("stop", "off")}${push("whistle", "off")}<i class="gap"></i>${push("save")}${push("open")}</div>
        <div class="tray"><i class="sliver"></i>${push("lift", "low on")}${push("whistle", "low off")}<i class="grow"></i>${push("cut", "low")}${push("copy", "low")}${push("paste", "low")}</div>
        <div class="checkpane">
          <table class="checks">
            <colgroup><col style="width:118px" /><col style="width:26px" /><col style="width:39px" /><col style="width:26px" /><col /></colgroup>
            <thead><tr><th>s</th><th>${icon("lift", "i16")}</th><th>State</th><th>${icon("whistlec", "i16")}</th><th>ERF Model</th></tr></thead>
            <tbody><tr><td>ignal Layer Checks</td><td>${icon("lift", "i16")}</td><td>${icon("man", "i16")}</td><td></td><td>Inner (Mid)</td></tr></tbody>
          </table>
        </div>
      </div>
    </aside>`;
  }

  private canvas() {
    return html`<div class="view">
      <div class="canvas">
        <svg shape-rendering="crispEdges" role="img" aria-label="Layer graphics">
          <defs><pattern id="hatch" width="2" height="2" patternUnits="userSpaceOnUse"><path d="M0 0h1v1H0zM1 1h1v1H1z" fill="#f00" /></pattern></defs>
          <g class="traces">${TRACES.map((d) => svg`<path d=${d}/>`)}</g>
          <circle cx="717.500" cy="211.500" r="83.500" fill="#000" /><circle cx="717.500" cy="211.500" r="83.500" fill="url(#hatch)" />
          <path d="M625 211.500h9" stroke="#7fe8e8" />
        </svg>
      </div>
      <div class="track v">${scrollBtn("up")}<i class="s134"></i><div class="knurl v"><i></i></div><i class="s260"></i>${scrollBtn("down")}</div>
      <div class="track">${scrollBtn("left")}<i class="s788"></i><div class="knurl h"><i></i></div><i class="s448"></i>${scrollBtn("right")}</div>
    </div>`;
  }

  private dock() {
    const filter = html`<svg class="filter" viewBox="0 0 9 7"><path d="M0 .5h9L5.500 4v3h-2V4z" /></svg>`;
    return html`<section class="dock">
      <div class="strip"><button class="push tiny" aria-label="Close dock">${icon("close")}</button></div>
      <div class="pane">
        <div class="tabs"><button class="tab">Signal Layer Checks</button><i class="tabline"></i></div>
        <div class="panebody">
          <div class="tools">
            ${push("tree", "w22")}${pushCaret()}${push("shapes")}${push("camera")}
            ${push("funnel", "w22")}${pushCaret()}${push("funnelx")}<i></i>
            ${push("zoom", "w22")}${pushCaret()}${push("multisel")}${push("arrow")}
            ${push("polyadd")}<i></i>${push("pinlayers")}${push("pinpen")}
          </div>
          <div class="layers">
            <button class="head">Layer<svg class="caret" viewBox="0 0 9 5"><path d="M2 1h6L5 4z" /></svg></button>
            <ul>${SIGNALS.map((s) => html`<li>${s}</li>`)}</ul>
          </div>
          <div class="results">
            <div class="rwrap">
              <table class="rtable">
                <colgroup><col style="width:124px" /><col style="width:183px" /><col style="width:56px" /><col style="width:52px" /><col style="width:55px" /><col style="width:62px" /><col /></colgroup>
                <thead><tr><th>Result</th><th>Category</th><th><span class="h">${filter}Sev</span></th>
                  <th><span class="h">Meas<svg class="sort" viewBox="0 0 13 7"><path d="M6.500 0L13 7H0z" /></svg></span></th>
                  <th><span class="h">${filter}Stat</span></th><th>Mark</th><th></th></tr></thead>
                <tbody>${RESULTS.map((r) => this.row(r))}</tbody>
              </table>
            </div>
            <div class="track v vtrack">${scrollBtn("up")}<i class="s77"></i><div class="knurl tall s161"><i></i></div><i class="s22"></i></div>
          </div>
          <div class="nav">${["top", "up", "down", "bottom"].map((n) => push(n, "w21"))}</div>
          <div class="acts">${["pencil", "mask", "redx", "chain"].map((n) => push(n, "w21"))}</div>
        </div>
      </div>
    </section>`;
  }

  private rightPanel() {
    return html`<aside class="right">
      <div class="right-head"></div>
      <div class="rtabs"><button class="on" aria-label="Layers">${icon("tab1")}</button><button aria-label="Edit">${icon("tab2")}</button><button aria-label="Inspect">${icon("tab3")}</button><button aria-label="More"></button></div>
      <div class="rbody"><div class="stack">
        <div class="shead"><span>${icon("h1", "i10")}</span><span>${icon("h2", "i10")}</span><span>${icon("h3", "i10")}</span><b>Layer</b></div>
        <ul class="rows">${LAYERS.map(([name, tone]) => html`<li><label>
          <input type="checkbox" ?checked=${name === "sig16t"} />
          <span class="pin">${name === "sig16t" ? html`<svg viewBox="0 0 22 22" preserveAspectRatio="none">${ICONS.snap}</svg>` : nothing}</span>
          <span class="lname ${tone}">${name}</span></label></li>`)}</ul>
        <div class="drills"><i class="drill"></i>
          <div class="drillcol"><svg viewBox="0 0 9 261"><path d="M.5.5h8v256l-4 4-4-4z" /></svg><i class="drill"></i></div>
          <i class="drill pale"></i></div>
      </div></div>
    </aside>`;
  }

  render() {
    return html`
      ${this.background()}
      <section class="remote">
        <div class="remote-title"><span class="grow">99 - 远程桌面连接</span>${this.caps()}</div>
        <div class="remote-body">
          <div class="session">
            <div class="apptitle">${TITLE.map((t) => html`<span>${t}</span>`)}
              <svg viewBox="0 0 54 14"><path d="M2 7.500h10M47.500 4.500h8v8h-8zM50 2.500h5" /></svg></div>
            <div class="menubar">
              <nav class="menus">${MENU.map((m) => html`<button>${m}</button>`)}</nav>
              <div class="brand"><svg viewBox="0 0 60 27"><path d="M1 22V5q0-4 4-4h9q3 0 3 3t-3 3H7v16q0 3-3 3t-3-4M7 7h9M17 9h43M17 12h43" /></svg><span>Frontline</span></div>
            </div>
            ${this.toolbars()}
            <div class="work">
              ${this.leftPanel()}
              <main class="center">
                ${this.canvas()}
                <div class="status">
                  <div class="cell first">${icon("funnelsel", "i22")}:${icon("redx", "i16")}${icon("tri", "i16")}<span class="txt">Selected: 0</span></div>
                  <div class="cell second">${icon("tri", "i16")}</div>
                </div>
                <div class="split"></div>
                ${this.dock()}
              </main>
              ${this.rightPanel()}
            </div>
          </div>
          <div class="rscroll">
            <button aria-label="scroll up"><svg class="sarrow" viewBox="0 0 9 5"><path d="M0 5h9L4.500 0z" /></svg></button>
            <div class="thumb"><i class="grip"></i></div><i class="rest"></i>
          </div>
        </div>
      </section>
      <section class="capture">
        <div class="ctitle">${icon("fsLogo", "i16")}<span>FastStone Capture</span>${icon("close", "i10")}</div>
        <div class="ctools">
          ${["fs1", "fs2", "fs3", "fs4", "fs5", "fs6"].map((n) => html`<button aria-label=${n}>${icon(n, "i14")}</button>`)}
          <i class="line"></i><button aria-label="draw">${icon("palette", "i16")}</button><button class="n" aria-label="draw options">${caret()}</button>
          <i class="line"></i><button aria-label="settings">${icon("fs8", "i16")}</button>
        </div>
      </section>
      <section class="notice"><header>${icon("home")}<span>系统提示</span></header><div>有系统消息</div></section>`;
  }
}
